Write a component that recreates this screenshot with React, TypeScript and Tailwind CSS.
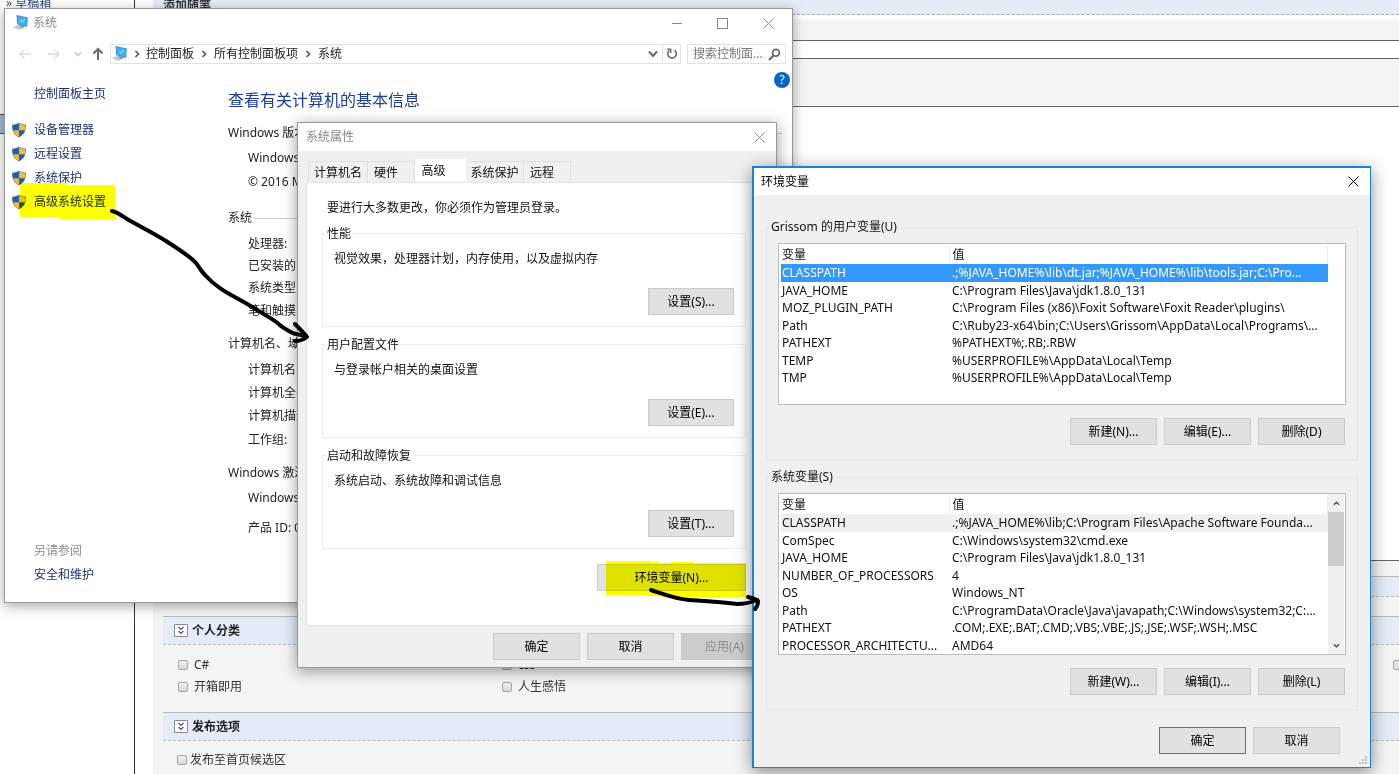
import React from 'react';

interface Variable {
    name: string;
    value: string;
}

const userVariables: Variable[] = [
    { name: 'CLASSPATH', value: '.;%JAVA_HOME%\\lib\\dt.jar;%JAVA_HOME%\\lib\\tools.jar;C:\\Pro...' },
    { name: 'JAVA_HOME', value: 'C:\\Program Files\\Java\\jdk1.8.0_131' },
    { name: 'MOZ_PLUGIN_PATH', value: 'C:\\Program Files (x86)\\Foxit Software\\Foxit Reader\\plugins\\' },
    { name: 'Path', value: 'C:\\Ruby23-x64\\bin;C:\\Users\\Grissom\\AppData\\Local\\Programs\\...' },
    { name: 'PATHEXT', value: '%PATHEXT%;.RB;.RBW' },
    { name: 'TEMP', value: '%USERPROFILE%\\AppData\\Local\\Temp' },
    { name: 'TMP', value: '%USERPROFILE%\\AppData\\Local\\Temp' },
];

const systemVariables: Variable[] = [
    { name: 'CLASSPATH', value: '.;%JAVA_HOME%\\lib;C:\\Program Files\\Apache Software Founda...' },
    { name: 'ComSpec', value: 'C:\\Windows\\system32\\cmd.exe' },
    { name: 'JAVA_HOME', value: 'C:\\Program Files\\Java\\jdk1.8.0_131' },
    { name: 'NUMBER_OF_PROCESSORS', value: '4' },
    { name: 'OS', value: 'Windows_NT' },
    { name: 'Path', value: 'C:\\ProgramData\\Oracle\\Java\\javapath;C:\\Windows\\system32;C:...' },
    { name: 'PATHEXT', value: '.COM;.EXE;.BAT;.CMD;.VBS;.VBE;.JS;.JSE;.WSF;.WSH;.MSC' },
    { name: 'PROCESSOR_ARCHITECTU...', value: 'AMD64' },
];

const ComputerIcon = () => (
    <svg width="16" height="16" viewBox="0 0 16 16" className="shrink-0">
        <path d="M0 12.300 6 9.500l7 2.300-6.500 3.200z" fill="#c3c8cc" />
        <path d="M6 10.500l3-.3 3 1.500-3.500 1.300z" fill="#8e979f" />
        <path d="M3.500 0 14.800 2.500 14.200 12 4.200 9.300z" fill="#3f8fc4" />
        <path d="M4.300 1 14 3.200l-.5 7.800-8.600-2.300z" fill="#3bb3f4" />
        <path d="M7.500 5.500 9 7l3-3" fill="none" stroke="#c9efff" strokeWidth="1" />
    </svg>
);

const ShieldIcon = () => (
    <svg width="16" height="16" viewBox="0 0 16 16" className="shrink-0">
        <path d="M8 .500C6 2 3.500 2.600 1 2.600.8 8.500 2.500 12.800 8 15.500c5.500-2.700 7.200-7 7-12.900C12.500 2.600 10 2 8 .500z" fill="#7d8183" />
        <path d="M7.800 1.500C6 2.700 4 3.300 1.800 3.400 1.700 5.200 1.900 6.700 2.200 8.200h5.600z" fill="#0a64c8" />
        <path d="M8.200 1.500c1.800 1.200 3.800 1.800 6 1.900.1 1.800-.1 3.300-.4 4.800H8.200z" fill="#fdbb2f" />
        <path d="M2.300 8.500h5.500v6C5 13.200 3.100 11.200 2.300 8.500z" fill="#fdbb2f" />
        <path d="M13.700 8.500H8.200v6c2.800-1.300 4.700-3.300 5.500-6z" fill="#0a64c8" />
    </svg>
);

const CloseIcon = () => (
    <svg width="11" height="11" viewBox="0 0 11 11" fill="none" stroke="currentColor">
        <path d="M.500.500l10 10M10.500.500l-10 10" />
    </svg>
);

const ChevronIcon = ({ className }: { className: string }) => (
    <svg width="8" height="8" viewBox="0 0 8 8" fill="none" stroke="currentColor" strokeWidth="1.600" className={className}>
        <path d="M2.500 1 5.500 4l-3 3" />
    </svg>
);

const ArrowIcon = ({ className }: { className: string }) => (
    <svg width="14" height="14" viewBox="0 0 14 14" fill="none" stroke="currentColor" className={className}>
        <path d="M7 13V2M2.500 6.500 7 2l4.500 4.500" />
    </svg>
);

interface DialogButtonProps {
    children: React.ReactNode;
    className?: string;
    disabled?: boolean;
}

const DialogButton = ({ children, className = 'w-[87px] border-[#cacaca]', disabled }: DialogButtonProps) => (
    <button
        disabled={disabled}
        className={`h-[27px] border text-center whitespace-nowrap ${disabled ? 'bg-[#cccccc] text-[#8c8c8c]' : 'bg-[#e1e1e1] text-black'} ${className}`}
    >
        {children}
    </button>
);

/* Blog editor behind the windows */
const Category = ({ id, label, gap = 'gap-[6px]' }: { id: string; label: string; gap?: string }) => (
    <div className={`flex h-[22px] items-center ${gap}`}>
        <input
            id={id}
            type="checkbox"
            className="size-[10px] appearance-none rounded-[2px] border border-[#a6a6a6] bg-linear-to-b from-[#f2f2f2] to-[#d8d8d8]"
        />
        <label htmlFor={id}>{label}</label>
    </div>
);

const SectionBar = ({ title }: { title: string }) => (
    <div className="ml-[10px] flex h-[29px] items-center gap-1 border-t border-b border-t-[#bbbbbb] border-b-[#bbbbbb] [border-bottom-style:dashed] bg-[#e4ecf7] pl-[11px] font-bold text-[#222]">
        <svg width="14" height="13" viewBox="0 0 14 13" fill="none">
            <path d="M.500.500h13v12H.500z" fill="#fff" stroke="#8a8a8a" />
            <path d="M4.500 3 7 5.500 9.500 3M4.500 7 7 9.500 9.500 7" stroke="#555" strokeWidth="1.200" />
        </svg>
        {title}
    </div>
);

const BlogEditor = () => (
    <div className="flex min-h-screen text-[#333]">
        <aside className="flex w-[135px] shrink-0 flex-col border-r border-[#333]">
            <div className="-mt-[5px] h-[119px] pl-[6px]">
                <a href="#drafts" className="leading-4 text-[#2c4f8f]">» 草稿箱</a>
            </div>
            <div className="h-5 border-t border-b border-[#555] bg-[#a9bcdd]"></div>
        </aside>
        <main className="ml-[18px] flex flex-1 flex-col bg-[#f4f4f4]">
            <div className="h-[15px] overflow-hidden border-b border-dashed border-[#aaaaaa] bg-[#e4ecf7] pl-[10px] leading-[12px] font-bold">添加随笔</div>
            <div className="h-1 bg-white"></div>
            <div className="h-[21px]"></div>
            <div className="h-[19px] border-t border-b border-[#666] bg-white"></div>
            <div className="h-[47px]"></div>
            <div className="h-[455px] border-t border-b border-[#666] bg-white"></div>
            <div className="h-[15px]"></div>
            <div className="ml-[10px] h-[21px] border-t border-b border-t-[#bbbbbb] border-b-[#bbbbbb] [border-bottom-style:dashed] bg-[#e4ecf7]"></div>
            <div className="h-[19px]"></div>
            <SectionBar title="个人分类" />
            <div className="flex h-[67px] pt-[9px] pl-[25px]">
                <div className="w-[324px]">
                    <Category id="csharp" label="C#" />
                    <Category id="box" label="开箱即用" />
                </div>
                <div className="flex-1">
                    <Category id="css" label="css" />
                    <Category id="life" label="人生感悟" />
                </div>
                <input type="checkbox" aria-label="其他" className="mt-[6px] -mr-1 size-[10px] appearance-none rounded-[2px] border border-[#a6a6a6] bg-[#e4e4e4]" />
            </div>
            <SectionBar title="发布选项" />
            <div className="pt-2 pl-6">
                <Category id="home" label="发布至首页候选区" gap="gap-[3px]" />
            </div>
        </main>
    </div>
);

const InfoRow = ({ children, className }: { children: React.ReactNode; className: string }) => (
    <div className={`pl-5 whitespace-nowrap ${className}`}>{children}</div>
);

const InfoTitle = ({ children, className }: { children: React.ReactNode; className: string }) => (
    <div className={`flex items-center gap-[2px] whitespace-nowrap ${className}`}>
        {children}
        <span className="h-px flex-1 bg-[#cccccc]"></span>
    </div>
);

const taskLinks = ['设备管理器', '远程设置', '系统保护', '高级系统设置'];

const SystemWindow = () => (
    <section className="absolute top-2 left-1 flex h-[595px] w-[789px] flex-col border border-[#999] bg-white text-[#222] shadow-[0_3px_12px_rgba(0,0,0,0.35)]">
        <header className="flex h-7 items-center pr-[18px] pl-2 text-[#8a8a8a]">
            <ComputerIcon />
            <span className="ml-1 flex-1">系统</span>
            <button aria-label="最小化" className="h-px w-[10px] bg-[#888]"></button>
            <button aria-label="最大化" className="ml-[35px] size-[11px] border border-[#888]"></button>
            <button aria-label="关闭" className="ml-[35px]"><CloseIcon /></button>
        </header>

        <nav className="mt-[7px] flex h-5 items-center pr-[6px] pl-[13px]">
            <ArrowIcon className="-rotate-90 text-[#c8c8c8]" />
            <ArrowIcon className="ml-[15px] rotate-90 text-[#c8c8c8]" />
            <ChevronIcon className="ml-[13px] rotate-90 text-[#c8c8c8]" />
            <button aria-label="向上" className="ml-[9px] text-[#6a6a6a]">
                <ArrowIcon className="[stroke-width:2]" />
            </button>
            <div className="ml-[5px] flex h-5 flex-1 items-center border border-[#e2e2e2] pl-px">
                <ComputerIcon />
                <ChevronIcon className="mx-[5px] text-[#555]" />
                控制面板
                <ChevronIcon className="mx-[6px] text-[#555]" />
                所有控制面板项
                <ChevronIcon className="mx-[6px] text-[#555]" />
                系统
                <span className="flex-1"></span>
                <svg width="10" height="10" viewBox="0 0 10 10" fill="none" stroke="#6a6a6a" strokeWidth="2" className="mr-1">
                    <path d="M1 2.500 5 7l4-4.500" />
                </svg>
                <button aria-label="刷新" className="flex h-5 w-[18px] items-center justify-center border-l border-[#e2e2e2]">
                    <svg width="12" height="12" viewBox="0 0 12 12" fill="none" stroke="#707070" strokeWidth="1.700">
                        <path d="M8.500 2.200A4.300 4.300 0 1 1 3.300 2.500" />
                        <path d="M1.200 1.300h3.500v3.700" strokeWidth="1.500" />
                    </svg>
                </button>
            </div>
            <div className="ml-[6px] flex h-5 w-[99px] items-center border border-[#e2e2e2] pr-1 pl-[5px]">
                <input aria-label="搜索" placeholder="搜索控制面..." className="w-full min-w-0 placeholder:text-[#777]" />
                <svg width="13" height="13" viewBox="0 0 13 13" fill="none" stroke="#666" className="shrink-0">
                    <circle cx="8" cy="4.800" r="3.400" strokeWidth="1.700" />
                    <path d="M5.500 7.500 1 12" strokeWidth="2" />
                </svg>
            </div>
        </nav>

        <div className="flex flex-1">
            <aside className="flex w-[223px] flex-col pt-[22px] pb-[19px] pl-[6px] leading-4 text-[#1c2f73]">
                <a href="#home" className="mb-3 h-6 pl-[23px]">控制面板主页</a>
                {taskLinks.map(link => (
                    <a key={link} href="#task" className="flex h-6 gap-[7px]">
                        <ShieldIcon />
                        {link}
                    </a>
                ))}
                <div className="mt-auto pl-[23px]">
                    <div className="h-6 text-[#8c8c8c]">另请参阅</div>
                    <a href="#security">安全和维护</a>
                </div>
            </aside>
            <main className="flex-1 pt-[8px] leading-4">
                <div className="flex justify-end pr-[2px]">
                    <button aria-label="帮助" className="size-4 rounded-full bg-[#0a66c2] text-center leading-4 text-white">?</button>
                </div>
                <h1 className="h-[37px] text-[16px] leading-6 text-[#1a3f9c]">查看有关计算机的基本信息</h1>
                <InfoTitle className="h-4 pr-[10px]">Windows 版本</InfoTitle>
                <InfoRow className="mt-[9px]">Windows 10</InfoRow>
                <InfoRow className="mt-2">© 2016 Mi</InfoRow>
                <InfoTitle className="mt-5 pr-[10px]">系统</InfoTitle>
                <InfoRow className="mt-[10px]">处理器:</InfoRow>
                <InfoRow className="mt-[6px]">已安装的内存</InfoRow>
                <InfoRow className="mt-[6px]">系统类型:</InfoRow>
                <InfoRow className="mt-[7px]">笔和触摸:</InfoRow>
                <InfoTitle className="mt-[17px] pr-[10px]">计算机名、域</InfoTitle>
                <InfoRow className="mt-[10px]">计算机名:</InfoRow>
                <InfoRow className="mt-[7px]">计算机全名:</InfoRow>
                <InfoRow className="mt-[7px]">计算机描述:</InfoRow>
                <InfoRow className="mt-2">工作组:</InfoRow>
                <InfoTitle className="mt-[17px] pr-[10px]">Windows 激活</InfoTitle>
                <InfoRow className="mt-[9px]">Windows</InfoRow>
                <InfoRow className="mt-[14px]">产品 ID: 00</InfoRow>
            </main>
        </div>
    </section>
);

const propertyGroups = [
    { title: '性能', text: '视觉效果，处理器计划，内存使用，以及虚拟内存', button: '设置(S)...' },
    { title: '用户配置文件', text: '与登录帐户相关的桌面设置', button: '设置(E)...' },
    { title: '启动和故障恢复', text: '系统启动、系统故障和调试信息', button: '设置(T)...' },
];

const PropertiesWindow = () => (
    <section className="absolute top-[122px] left-[297px] flex h-[546px] w-[480px] flex-col border border-[#999] bg-[#f0f0f0] text-[#111] shadow-[0_3px_14px_rgba(0,0,0,0.4)]">
        <header className="flex h-7 items-center justify-between bg-white pr-[11px] pl-2 text-[#8a8a8a]">
            系统属性
            <button aria-label="关闭"><CloseIcon /></button>
        </header>
        <div role="tablist" className="mt-2 flex h-[23px] items-end pl-[10px]">
            <button role="tab" className="h-[21px] w-[60px] border border-b-0 border-[#dfdfdf] pt-px">计算机名</button>
            <button role="tab" className="h-[21px] w-[47px] border border-b-0 border-l-0 border-[#dfdfdf] pt-px pr-[10px]">硬件</button>
            <button role="tab" aria-selected="true" className="h-[23px] w-[51px] bg-white pr-[14px]">高级</button>
            <button role="tab" className="h-[21px] w-[58px] border border-b-0 border-l-0 border-[#dfdfdf] pt-px whitespace-nowrap">系统保护</button>
            <button role="tab" className="h-[21px] w-[47px] border border-b-0 border-l-0 border-[#dfdfdf] pt-px pr-[10px]">远程</button>
        </div>
        <div className="mr-2 ml-[8px] flex h-[444px] flex-col border border-[#e3e3e3] bg-white pt-[17px] pr-[21px] pl-[15px] leading-4">
            <p className="mb-2 pl-[5px]">要进行大多数更改，你必须作为管理员登录。</p>
            {propertyGroups.map(group => (
                <fieldset key={group.title} className="mb-2 h-[103px] border border-[#ececec] px-[11px]">
                    <legend className="-ml-2 px-[1px] pt-[2px] leading-4">{group.title}</legend>
                    <p className="mt-[9px]">{group.text}</p>
                    <div className="mt-[21px] flex justify-end">
                        <DialogButton className="w-[86px] border-[#cacaca]">{group.button}</DialogButton>
                    </div>
                </fieldset>
            ))}
            <div className="mt-[7px] flex justify-end">
                <DialogButton className="w-[149px] border-[#cacaca]">环境变量(N)...</DialogButton>
            </div>
        </div>
        <div className="mt-[7px] flex justify-end gap-[7px] pr-2">
            <DialogButton>确定</DialogButton>
            <DialogButton>取消</DialogButton>
            <DialogButton disabled>应用(A)</DialogButton>
        </div>
    </section>
);

interface VariableGroupProps {
    title: string;
    variables: Variable[];
    firstRow: string;
    scrollable?: boolean;
    buttons: string[];
    className: string;
}

const VariableGroup = ({ title, variables, firstRow, scrollable, buttons, className }: VariableGroupProps) => (
    <fieldset className={`mx-3 border border-[#e4e4e4] px-[11px] ${className}`}>
        <legend className="-ml-2 px-[1px] leading-4">{title}</legend>
        <div className="mt-2 flex h-[162px] overflow-hidden border border-[#b9bcc3] bg-white">
            <div className="min-w-0 flex-1 pt-[2px] pl-[2px]">
                <table className="w-full table-fixed border-collapse">
                    <colgroup>
                        <col className="w-[168px]" />
                        <col />
                    </colgroup>
                    <thead>
                        <tr className="leading-[18px]">
                            <th className="border-r border-[#ececec] pl-px text-left font-normal">变量</th>
                            <th className="border-r border-[#ececec] pl-[3px] text-left font-normal">值</th>
                        </tr>
                    </thead>
                    <tbody>
                        {variables.map((variable, index) => (
                            <tr key={variable.name} className={`odd:leading-[18px] even:leading-[17px] ${index === 0 ? firstRow : ''}`}>
                                <td className="truncate pl-px">{variable.name}</td>
                                <td className="truncate pl-[3px]">{variable.value}</td>
                            </tr>
                        ))}
                    </tbody>
                </table>
            </div>
            {scrollable ? (
                <div className="mr-px flex w-4 flex-col items-center bg-[#f0f0f0] text-[#505050]">
                    <span className="flex h-[18px] items-center"><ChevronIcon className="size-[7px] -rotate-90" /></span>
                    <span className="h-[54px] w-full bg-[#cdcdcd]"></span>
                    <span className="mt-auto flex h-[18px] items-center"><ChevronIcon className="size-[7px] rotate-90" /></span>
                </div>
            ) : (
                <div className="w-[17px]"></div>
            )}
        </div>
        <div className="mt-[13px] flex justify-end gap-[7px] pr-px">
            {buttons.map(button => (
                <DialogButton key={button}>{button}</DialogButton>
            ))}
        </div>
    </fieldset>
);

const EnvironmentWindow = () => (
    <section className="absolute top-[166px] left-[752px] flex h-[602px] w-[619px] flex-col border-t-2 border-r border-b border-l-2 border-[#1883d7] bg-[#f0f0f0] text-[#111] shadow-[0_4px_16px_rgba(0,0,0,0.45)]">
        <header className="flex h-[27px] items-center justify-between bg-white pr-[11px] pl-[7px] text-black">
            环境变量
            <button aria-label="关闭"><CloseIcon /></button>
        </header>
        <VariableGroup
            title="Grissom 的用户变量(U)"
            variables={userVariables}
            firstRow="bg-[#3399ff] text-white"
            buttons={['新建(N)...', '编辑(E)...', '删除(D)']}
            className="mt-6 h-[241px]"
        />
        <VariableGroup
            title="系统变量(S)"
            variables={systemVariables}
            firstRow="bg-[#f0f0f0]"
            scrollable
            buttons={['新建(W)...', '编辑(I)...', '删除(L)']}
            className="mt-[9px] h-[241px]"
        />
        <div className="mt-[17px] flex justify-end gap-[7px] pr-[30px]">
            <DialogButton className="w-[87px] border-[#1883d7]">确定</DialogButton>
            <DialogButton>取消</DialogButton>
        </div>
        <svg width="9" height="9" viewBox="0 0 9 9" fill="#bfbfbf" className="absolute right-[2px] bottom-[2px]">
            <path d="M6 0h2v2H6zM3 3h2v2H3zM6 3h2v2H6zM0 6h2v2H0zM3 6h2v2H3zM6 6h2v2H6z" />
        </svg>
    </section>
);

/* Marker strokes and hand drawn arrows over the windows */
const Annotations = () => (
    <>
        <svg width="760" height="774" viewBox="0 0 760 774" fill="#ffff00" className="pointer-events-none absolute top-0 left-0 mix-blend-multiply">
            <path d="M20 183h48v2h23v0h24v34H60v-1.500h-7V217H20z" />
            <path d="M606 561h45v1h8v1h12v-1h22v1h34v0h19v34h-19v1h-27v-1h-38v-1h-14v-1h-42z" />
        </svg>
        <svg width="780" height="774" viewBox="0 0 780 774" fill="none" stroke="#000" strokeWidth="4" strokeLinecap="round" strokeLinejoin="round" className="pointer-events-none absolute top-0 left-0">
            <path d="M112 211c5 1 9 4 15 8 14 8 28 15 39 22 11 7 20 13 27 19 6 5 6 9 12 15 14 16 32 22 49 33 10 7 20 11 27 18 6 4 10 7 15 8l10 2" />
            <path d="M295 324c4 4 8 8 12 13-4 3-8 4-12 4" />
            <path d="M651 590c12 4 24 9 38 10 18 1 34 2 48 4 8 0 13-1 20-4" />
            <path d="M748 597c4 1 8 2 10 4 0 3-1 6-3 8" />
        </svg>
    </>
);

const App: React.FC = () => {
    return (
        <div className="relative isolate min-h-screen overflow-hidden bg-white font-['Noto_Sans','Noto_Sans_CJK_SC',sans-serif] text-xs">
            <BlogEditor />
            <SystemWindow />
            <PropertiesWindow />
            <EnvironmentWindow />
            <Annotations />
        </div>
    );
};

export default App;
